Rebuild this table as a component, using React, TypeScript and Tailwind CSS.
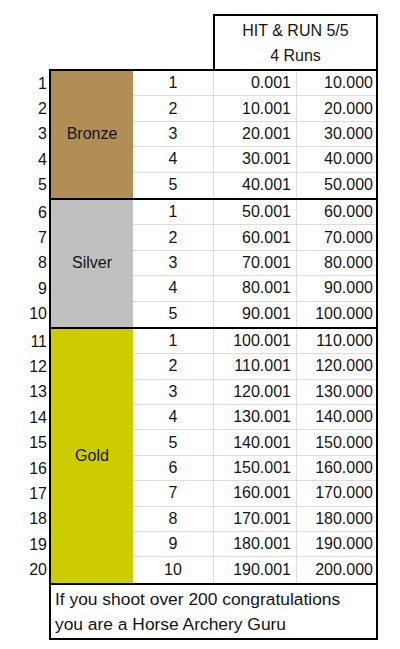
// <== IMPORTS ==>
import { JSX } from "react";

// <== DATA ==>
type Group = { name: string; color: string; start: number; count: number };

const groups: Group[] = [
  { name: "Bronze", color: "bg-[#b08e56]", start: 0, count: 5 },
  { name: "Silver", color: "bg-[#c0c0c0]", start: 5, count: 5 },
  { name: "Gold", color: "bg-[#cccc00]", start: 10, count: 10 },
];

const fmt = (n: number): string => n.toFixed(3);

// <== GROUP BLOCK ==>
const GroupBlock = ({ group, first }: { group: Group; first: boolean }): JSX.Element => {
  const rows = Array.from({ length: group.count }, (_, i) => i);
  return (
    <div className="flex">
      {/* ROW NUMBERS */}
      <div
        className={`w-[49px] flex flex-col border-b-2 border-transparent ${first ? "border-t-2" : ""}`}
      >
        {rows.map((i) => (
          <div key={i} className="h-[25.4px] flex items-center justify-end pr-[2px]">
            {group.start + i + 1}
          </div>
        ))}
      </div>
      {/* BOX */}
      <div
        className={`flex border-x-2 border-b-2 border-black ${first ? "border-t-2" : ""}`}
      >
        {/* COLORED LABEL */}
        <div className={`w-[82px] flex items-center justify-center ${group.color}`}>
          {group.name}
        </div>
        {/* VALUES */}
        <div className="flex flex-col">
          {rows.map((i) => {
            const idx = group.start + i;
            const last = i === group.count - 1;
            return (
              <div
                key={i}
                className={`h-[25.4px] flex ${last ? "" : "border-b border-[#dcdcdc]"}`}
              >
                <div className="w-[81px] flex items-center justify-center border-r border-[#dcdcdc]">
                  {i + 1}
                </div>
                <div className="w-[83px] flex items-center justify-end pr-[5px] border-r border-[#dcdcdc]">
                  {fmt(idx * 10 + 0.001)}
                </div>
                <div className="w-[79px] flex items-center justify-end pr-[3px]">
                  {fmt((idx + 1) * 10)}
                </div>
              </div>
            );
          })}
        </div>
      </div>
    </div>
  );
};

// <== APP COMPONENT ==>
const App = (): JSX.Element => {
  return (
    <div className="w-[400px] h-[649px] bg-white pt-[14px] text-[16px] text-[#141414] font-['Liberation_Sans',Arial,sans-serif]">
      {/* HEADER */}
      <div className="flex">
        <div className="w-[213px]" />
        <div className="w-[165px] h-[55px] border-x-2 border-t-2 border-black flex flex-col items-center justify-center leading-[25px]">
          <span>HIT &amp; RUN 5/5</span>
          <span>4 Runs</span>
        </div>
      </div>
      {/* GROUPS */}
      {groups.map((g, i) => (
        <GroupBlock key={g.name} group={g} first={i === 0} />
      ))}
      {/* FOOTER */}
      <div className="flex">
        <div className="w-[49px]" />
        <div className="w-[329px] border-x-2 border-b-2 border-black pl-[4px] pt-[2px] pb-[1px] text-[17.4px] leading-[25px]">
          <p>If you shoot over 200 congratulations</p>
          <p>you are a Horse Archery Guru</p>
        </div>
      </div>
    </div>
  );
};

// <== EXPORT APP COMPONENT ==>
export default App;
